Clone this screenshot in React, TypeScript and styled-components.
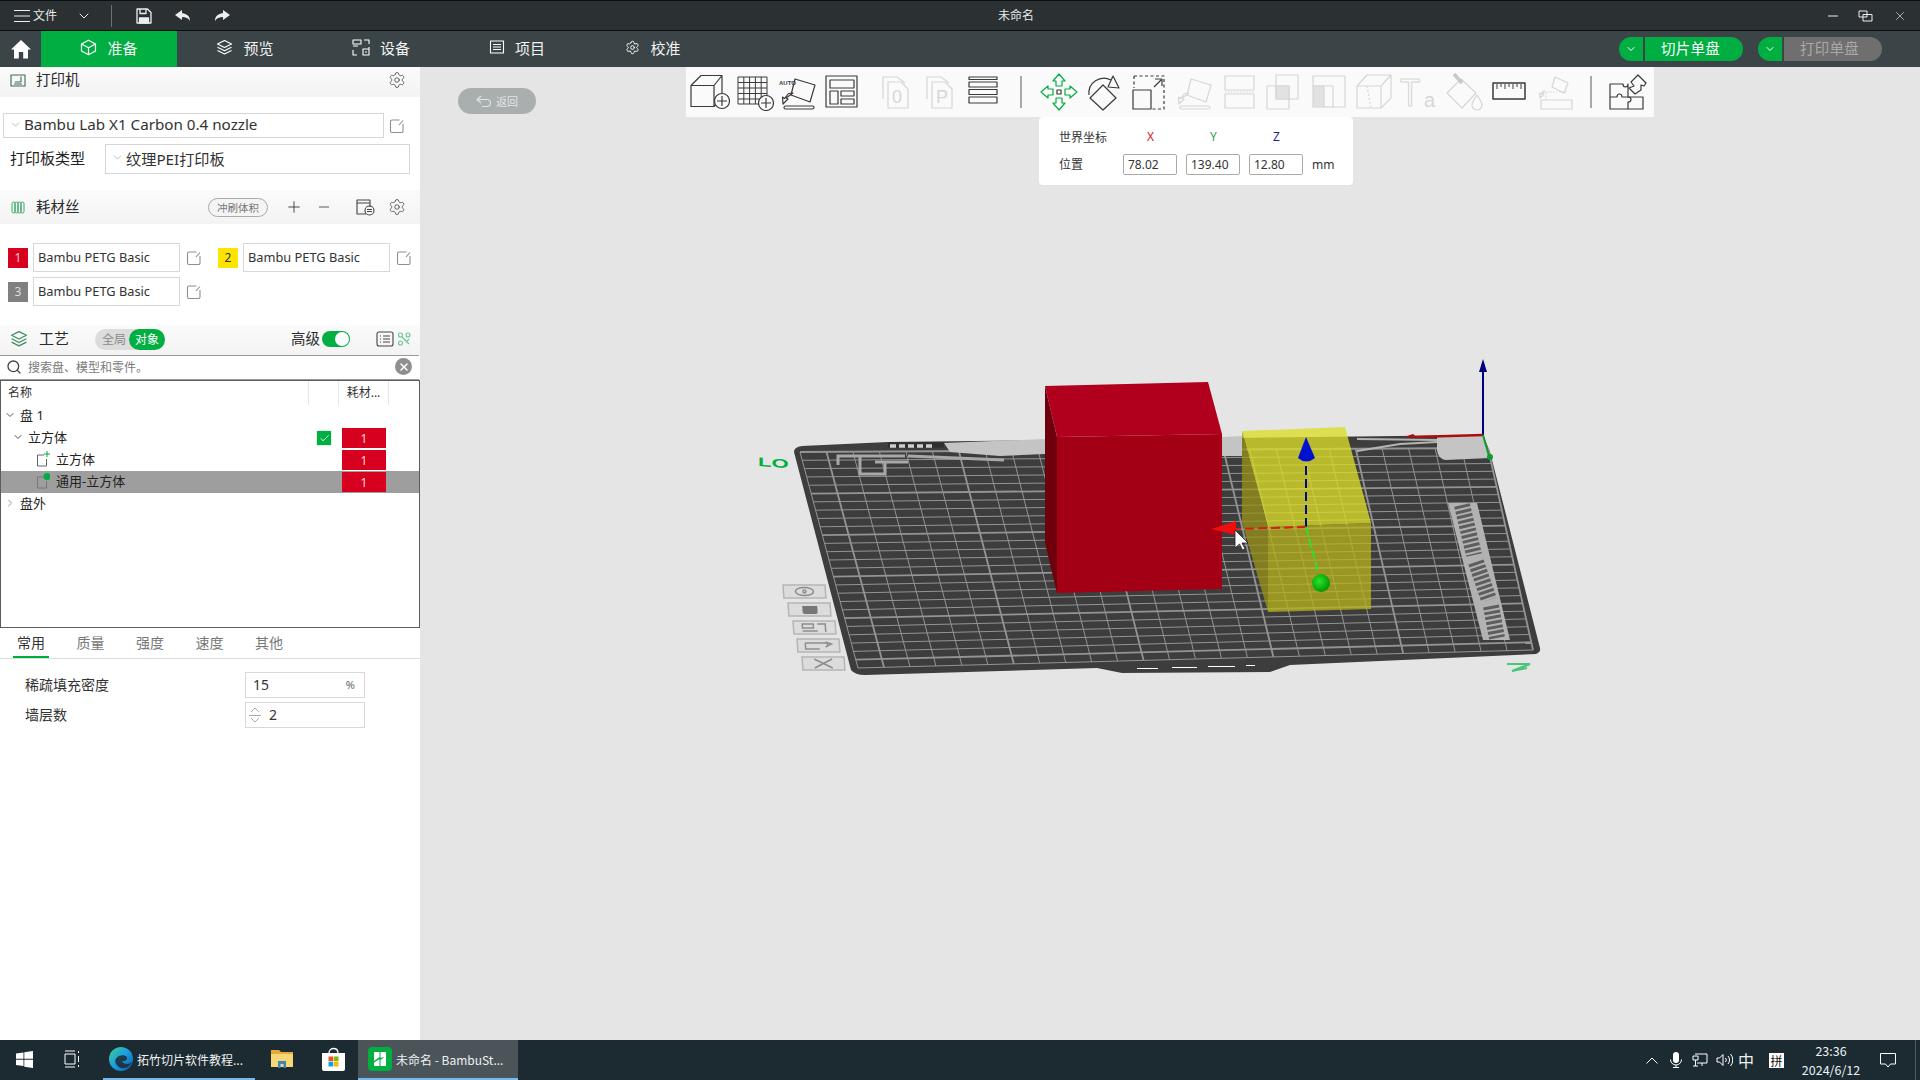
import React from "react";
import styled, { createGlobalStyle } from "styled-components";
import { ChevronDown, ChevronRight, Settings, Search, X, Plus, Minus, Check } from "lucide-react";

const UI = `"Noto Sans", "Noto Sans CJK SC", sans-serif`;
const GREEN = "#00ae42";
const RED = "#d8001f";

const Global = createGlobalStyle`
  html, body { margin: 0; padding: 0; background: #e5e5e5; }
  * { box-sizing: border-box; }
  body { font-family: ${UI}; color: #262e30; }
`;

const Root = styled.div`
  width: 1920px; height: 1080px; overflow: hidden;
  display: grid; grid-template-rows: 31px 36px 1fr 40px;
`;

/* title bar */
const TitleBar = styled.header`
  position: relative; display: flex; align-items: center; background: #2b3133; color: #e8eaea;
  border: 1px solid #0b0d0e; border-width: 1px 0;
`;
const TitleLeft = styled.div`display: flex; align-items: center; padding-left: 14px;`;
const FileLabel = styled.span`font-size: 12px; margin-left: 3px; width: 25px; white-space: nowrap; padding-bottom: 1px;`;
const TitleDivider = styled.span`width: 1px; height: 22px; background: #6b7274; margin: 0 24px 0 19px;`;
const TitleIconBtn = styled.span`display: flex; width: 16px; margin-right: 23px;`;
const TitleText = styled.div`
  position: absolute; left: 0; right: 0; text-align: center; font-size: 12px; pointer-events: none; padding: 0 0 2px 112px;
`;
const WinControls = styled.div`margin-left: auto; display: flex; align-items: center; gap: 20px; padding-right: 13px;`;

/* nav */
const NavBar = styled.nav`display: flex; align-items: center; background: #3b4446; color: #f1f2f2;`;
const HomeSlot = styled.div`width: 41px; display: flex; justify-content: center; padding-left: 1px;`;
const NavTab = styled.div<{ $active?: boolean }>`
  width: 136px; height: 36px; display: flex; align-items: center; justify-content: center; gap: 10px; font-size: 15px; padding-bottom: 4px;
  background: ${(p) => (p.$active ? GREEN : "transparent")};
`;
const NavRight = styled.div`margin-left: auto; display: flex; gap: 15px; padding-right: 38px;`;
const SplitBtn = styled.div`display: flex; height: 24px; gap: 2px;`;
const SplitHead = styled.span`
  width: 24px; border-radius: 12px 0 0 12px; background: ${GREEN}; display: flex; align-items: center; justify-content: center; color: #fff;
`;
const SplitMain = styled.span<{ $off?: boolean }>`
  width: 98px; border-radius: 0 12px 12px 0; display: flex; align-items: center; justify-content: center; font-size: 14.5px; letter-spacing: .3px; padding: 0 7px 3px 0;
  background: ${(p) => (p.$off ? "#6f6f6f" : GREEN)}; color: ${(p) => (p.$off ? "#a9a9a9" : "#fff")};
`;

/* main */
const Main = styled.main`display: flex; min-height: 0;`;
const Sidebar = styled.aside`width: 420px; background: #fff; display: flex; flex-direction: column;`;
const SectionHead = styled.div<{ $h: number; $pb?: number }>`
  height: ${(p) => p.$h}px; display: flex; align-items: center; background: linear-gradient(#fbfbfb, #f3f3f3); padding: 0 14px ${(p) => p.$pb ?? 0}px 10px; font-size: 14px; color: #2c2c2c;
`;
const HeadTitle = styled.span`margin-left: 10px; font-size: 14.5px; padding-bottom: 4px;`;
const Spacer = styled.span`flex: 1;`;
const PrinterBody = styled.div`padding: 16px 10px 16px 3px; display: flex; flex-direction: column; gap: 6px;`;
const Row = styled.div`display: flex; align-items: center;`;
const SelectBox = styled.div<{ $w: number; $h: number }>`
  width: ${(p) => p.$w}px; height: ${(p) => p.$h}px; border: 1px solid #d6d6d6; display: flex; align-items: center; padding: 0 0 3px 5px; gap: 2px; font-size: 15.2px; color: #333; white-space: nowrap;
`;
const EditSlot = styled.span`display: flex; margin-left: 5px;`;
const PlateLabel = styled.span`width: 102px; padding: 0 0 3px 7px; font-size: 15px; color: #222; white-space: nowrap;`;
const FlushPill = styled.span`
  width: 60px; height: 19px; border: 1px solid #aaa; border-radius: 10px; background: #f4f4f4; color: #777; font-size: 10.5px; display: flex; align-items: center; justify-content: center; margin-right: 17px;
`;
const HeadBtn = styled.span<{ $mr: number }>`display: flex; margin-right: ${(p) => p.$mr}px; color: #444;`;
const FilamentBody = styled.div`padding: 19px 0 19px 8px; display: grid; grid-template-columns: 210px 202px; row-gap: 5px;`;
const FilamentItem = styled.div`display: flex; align-items: center; height: 29px;`;
const Swatch = styled.span<{ $c: string; $fg: string }>`
  width: 20px; height: 20px; background: ${(p) => p.$c}; color: ${(p) => p.$fg}; font-size: 12px; display: flex; align-items: center; justify-content: center; margin-right: 5px;
`;
const FilamentName = styled.span`
  width: 147px; height: 29px; border: 1px solid #d8d8d8; display: flex; align-items: center; padding: 0 0 1px 4px; font-size: 12.8px; color: #333; margin-right: 6px;
`;
const ProcTitle = styled.span`margin-left: 11px; font-size: 15px; width: 56px; padding-bottom: 3px;`;
const ScopePill = styled.span`width: 70px; height: 21px; border-radius: 11px; background: #dcdcdc; display: flex; align-items: center; font-size: 12px; color: #8a8a8a; padding-left: 7px;`;
const ScopeOn = styled.span`margin-left: 3px; flex: 1; height: 21px; border-radius: 11px; background: ${GREEN}; color: #fff; display: flex; align-items: center; justify-content: center;`;
const Advanced = styled.span`margin-left: auto; font-size: 14.500px; margin-right: 2px; padding-bottom: 3px;`;
const Toggle = styled.span`width: 28px; height: 16px; border-radius: 8px; background: ${GREEN}; display: flex; justify-content: flex-end; align-items: center; padding-right: 1px; margin-right: 26px;`;
const Knob = styled.span`width: 14px; height: 14px; border-radius: 50%; background: #fff;`;
const SearchBar = styled.div`
  height: 25px; border: 1px solid #9a9a9a; border-width: 1px 0 1px 0; display: flex; align-items: center; padding: 0 7px 2px 6px; font-size: 12px; color: #7a7a7a; gap: 6px; margin-right: 1px;
`;
const ClearBtn = styled.span`margin-left: auto; width: 17px; height: 17px; border-radius: 50%; background: #8f8f8f; color: #fff; display: flex; align-items: center; justify-content: center;`;
const Tree = styled.div`height: 248px; border: 1px solid #5c5c5c; display: flex; flex-direction: column;`;
const TreeHead = styled.div`height: 24px; display: grid; grid-template-columns: 308px 30px 50px 1fr; font-size: 12px; color: #333;`;
const TreeHeadCell = styled.span<{ $c?: boolean }>`
  display: flex; align-items: center; padding: 0 0 2px ${(p) => (p.$c ? 0 : 7)}px; justify-content: ${(p) => (p.$c ? "center" : "flex-start")}; border-right: 1px solid #e6e6e6;
`;
const TreeRow = styled.div<{ $sel?: boolean }>`
  height: 22px; display: grid; grid-template-columns: 308px 30px 50px 1fr; align-items: center; font-size: 13px; color: #222;
  background: ${(p) => (p.$sel ? "#9e9e9e" : "transparent")};
`;
const TreeName = styled.span<{ $lvl: number }>`display: flex; align-items: center; gap: ${(p) => (p.$lvl === 2 ? 6 : 0)}px; padding: 0 0 3px ${(p) => [3, 11, 35][p.$lvl]}px;`;
const Caret = styled.span`display: flex; width: 16px; color: #555;`;
const CheckBox = styled.span`width: 14px; height: 14px; margin: 0 auto; background: ${GREEN}; display: flex; align-items: center; justify-content: center; color: #fff; box-shadow: 0 0 2px #8fd8a8;`;
const FilCell = styled.span`height: 20px; width: 44px; margin: 0 auto; background: ${RED}; color: #f7d5d9; font-size: 12px; display: flex; align-items: center; justify-content: center;`;
const Tabs = styled.div`height: 31px; display: flex; border-bottom: 1px solid #dcdcdc; padding-left: 13px; gap: 23.500px; font-size: 14px; color: #777;`;
const Tab = styled.span<{ $on?: boolean }>`
  width: 36px; height: 30px; display: flex; align-items: center; justify-content: center; color: ${(p) => (p.$on ? "#333" : "#777")};
  border-bottom: 2px solid ${(p) => (p.$on ? GREEN : "transparent")};
`;
const Fields = styled.div`padding: 13px 0 0 25px; display: flex; flex-direction: column; gap: 4px;`;
const FieldRow = styled.div`display: flex; align-items: center; font-size: 14px; color: #333;`;
const FieldLabel = styled.span`width: 220px; padding-bottom: 2px;`;
const FieldInput = styled.div`width: 120px; height: 26px; border: 1px solid #d8d8d8; display: flex; align-items: center; padding: 0 9px 1px 7px; font-size: 14px; color: #333;`;
const Unit = styled.span`margin-left: auto; font-size: 11px; color: #666;`;
const Stepper = styled.span`display: flex; flex-direction: column; margin: 0 8px 0 -4px; color: #aaa;`;

/* viewport */
const Viewport = styled.section`position: relative; flex: 1; background: #e5e5e5; overflow: hidden;`;
const Scene = styled.svg`position: absolute; inset: 0; width: 1500px; height: 973px;`;
const BackBtn = styled.div`
  position: absolute; left: 38px; top: 21px; width: 78px; height: 26px; border-radius: 13px; background: #a9afaf; color: #e3e5e5; font-size: 11px; display: flex; align-items: center; justify-content: center; gap: 4px;
`;
const Toolbar = styled.div`
  position: relative; margin-left: 266px; width: 968px; height: 50px; background: #fafafa; display: flex; align-items: center; padding-left: 2px;
`;
const ToolGroup = styled.div<{ $ml: number }>`display: flex; margin-left: ${(p) => p.$ml}px;`;
const ToolSlot = styled.span<{ $w: number }>`width: ${(p) => p.$w}px; display: flex; justify-content: center; align-items: center;`;
const ToolSep = styled.span<{ $ml: number }>`width: 2px; height: 32px; background: #a8a8a8; margin-left: ${(p) => p.$ml}px;`;
const PosPanel = styled.div`
  position: relative; margin-left: 619px; width: 314px; height: 68px; background: #fff; border-radius: 4px; padding: 9px 0 0 20px; font-size: 12px; color: #333;
  display: grid; grid-template-columns: 64px 63px 63px 63px 1fr; grid-template-rows: 21px 24px; row-gap: 5px; align-items: center;
`;
const AxisLabel = styled.span<{ $c: string }>`color: ${(p) => p.$c}; padding-left: 24px;`;
const PosInput = styled.span`width: 54px; height: 21px; border: 1px solid #aaa; border-radius: 2px; display: flex; align-items: center; padding-left: 4px; font-size: 12px;`;

/* taskbar */
const Taskbar = styled.footer`background: #1c2a31; color: #eef1f2; display: flex; align-items: center; font-family: "Noto Sans CJK SC", "Noto Sans", sans-serif; font-size: 12px;`;
const TaskSlot = styled.div<{ $w: number; $active?: boolean; $open?: boolean; $pl?: number; $pr?: number }>`
  width: ${(p) => p.$w}px; height: 40px; display: flex; align-items: center; justify-content: ${(p) => (p.$pl ? "flex-start" : "center")}; gap: 4px; white-space: nowrap;
  padding: 0 ${(p) => p.$pr ?? 0}px 0 ${(p) => p.$pl ?? 0}px;
  background: ${(p) => (p.$active ? "#4a5459" : "transparent")};
  border-bottom: 2px solid ${(p) => (p.$open ? "#76b9ed" : "transparent")};
`;
const Tray = styled.div`margin-left: auto; display: flex; align-items: center; gap: 8px; padding-right: 19px;`;
const TrayItem = styled.span<{ $ml: number }>`display: flex; margin-left: ${(p) => p.$ml}px;`;
const ImeBox = styled.span`width: 15px; height: 15px; background: #fff; color: #111; font-size: 12px; line-height: 15px; text-align: center; margin-left: 7px;`;
const ImeText = styled.span`font-size: 16px; margin-left: -3px;`;
const Clock = styled.span`width: 66px; margin: 0 8px 0 6px; text-align: center; font-size: 12.500px; line-height: 19px;`;
const ShowDesktop = styled.span`width: 1px; height: 40px; background: #4e5a60; margin-right: 4px;`;

/* Icons */
type S = { c?: string };
const Svg = styled.svg`display: block; fill: none; stroke-linejoin: round;`;
const Edit = () => (
  <Svg width="16" height="16" viewBox="0 0 16 16" stroke="#8e8e8e" strokeWidth="1.1">
    <path d="M10.5 2H3a1.5 1.5 0 0 0-1.5 1.5V13A1.5 1.5 0 0 0 3 14.5h9.5A1.5 1.5 0 0 0 14 13V6M14 2.500L10 7" />
  </Svg>
);
const Gear = () => <Settings size={18} strokeWidth={1.2} color="#555" />;
const Cube = ({ c = "#fff" }: S) => (
  <Svg width="17" height="17" viewBox="0 0 17 17" stroke={c} strokeWidth="1.2">
    <path d="M8.5 1.2L15.5 5v7l-7 3.8L1.5 12V5zM1.5 5l7 3.8L15.5 5M8.5 8.8v7" />
  </Svg>
);
const LayersIco = ({ c = "#fff", s = 17 }: S & { s?: number }) => (
  <Svg width={s} height={s} viewBox="0 0 17 17" stroke={c} strokeWidth="1.2">
    <path d="M8.5 1.5L15.5 5l-7 3.5L1.5 5zM1.5 8.3l7 3.5 7-3.5M1.5 11.5l7 3.5 7-3.5" />
  </Svg>
);
const DeviceIco = () => (
  <Svg width="18" height="17" viewBox="0 0 18 17" stroke="#fff" strokeWidth="1.1">
    <path d="M1 1h8v4H1zM12 1h5v4M1 7h5M1 11v5h4M17 8v8h-6v-6h6M13 13h2" />
  </Svg>
);
const ProjectIco = () => (
  <Svg width="16" height="16" viewBox="0 0 16 16" stroke="#fff" strokeWidth="1.1">
    <path d="M1.5 2h13v12h-13zM4 5.5h8M4 8h8M4 10.5h8" />
  </Svg>
);
const CalibIco = () => <Settings size={15} strokeWidth={1.5} color="#fff" />;
const HomeIco = () => (
  <svg width="20" height="20" viewBox="0 0 20 20"><path fill="#fff" d="M10 1L20 10.500H17V19.500H12.200V13H7.800V19.500H3V10.500H0z" /></svg>
);
const WinBtnMin = () => <Svg width="10" height="10" viewBox="0 0 10 10" stroke="#eee"><path d="M0 5h10" /></Svg>;
const WinBtnMax = () => (
  <Svg width="15" height="12" viewBox="0 0 15 12" stroke="#eee"><path d="M1 1h8v6H1zM5 4.5h9V11H5z" /></Svg>
);

const PrinterIco = () => (
  <Svg width="16" height="14" viewBox="0 0 16 14" stroke="#3d6b52" strokeWidth="1.1">
    <path d="M1 2h14v11H1zM4 11h8M11 3.5V9M5 9h6" />
  </Svg>
);
const FilamentIco = () => (
  <Svg width="16" height="13" viewBox="-1 0 16 13" stroke="#3aa76a" strokeWidth="1">
    <rect x="1" y="1" width="3" height="11" rx="1.5" /><rect x="4" y="1" width="3" height="11" rx="1.5" /><rect x="7" y="1" width="3" height="11" rx="1.5" /><rect x="10" y="1" width="3" height="11" rx="1.5" />
  </Svg>
);
const FlushIco = () => (
  <Svg width="20" height="17" viewBox="0 0 20 17" stroke="#444" strokeWidth="1.1">
    <path d="M2 1h13v3H2zM2 4v11h9M15 4v4" /><circle cx="14.5" cy="11.5" r="4.5" /><path d="M12 10.5h5M12 12.5h5" />
  </Svg>
);
const ListIco = () => (
  <Svg width="18" height="16" viewBox="0 0 18 16" stroke="#444" strokeWidth="1.1">
    <rect x="1" y="1" width="16" height="14" rx="2" /><path d="M4 5h1M7 5h7M4 8h1M7 8h7M4 11h1M7 11h7" />
  </Svg>
);
const ToolsIco = () => (
  <Svg width="14" height="14" viewBox="0 0 14 14" stroke="#6cc48f" strokeWidth="1.1">
    <circle cx="3.5" cy="3" r="2" /><circle cx="11" cy="3" r="2" /><circle cx="3.5" cy="11" r="2" /><path d="M5 5l7 7M9 10l3-3" />
  </Svg>
);
const PartIco = ({ dot }: { dot?: boolean }) => (
  <Svg width="14" height="16" viewBox="0 0 14 16" stroke={dot ? "#777" : "#666"} strokeWidth="1">
    <path d="M8 4H1.5v11h9V8" />
    {dot ? <circle cx="11" cy="3.5" r="3.5" fill={GREEN} stroke="none" /> : <path d="M11 0v6M8 3h6" stroke={GREEN} />}
  </Svg>
);

const D = "#3a3a3a";
const L = "#d6d6d6";
const Tool = ({ children, c = D }: { children: React.ReactNode; c?: string }) => (
  <Svg width="40" height="38" viewBox="0 0 40 38" stroke={c} strokeWidth="1.2">{children}</Svg>
);
const PlusDisc = ({ x, y }: { x: number; y: number }) => (
  <g>
    <circle cx={x} cy={y} r="7.5" fill="#fafafa" />
    <path d={`M${x - 5} ${y}h10M${x} ${y - 5}v10`} />
  </g>
);
const ToolA = () => (
  <Tool><path d="M1 12.5L11 2.5h21v23l-8 8H1zM1 12.5h23v21M24 12.5l8-10" /><PlusDisc x={32} y={28} /></Tool>
);
const ToolB = () => (
  <Tool>
    <path d="M4 4h29v27H4zM4 9.5h29M4 15h29M4 20.5h29M4 26h29M9.8 4v27M15.6 4v27M21.4 4v27M27.2 4v27" strokeWidth="1" />
    <PlusDisc x={32} y={30} />
  </Tool>
);
const OrientShape = ({ c }: { c: string }) => (
  <g stroke={c}>
    <path d="M17 6l20 6-5 17-19-7z" />
    <path d="M15 20l-7 5 2 1-5 5-.5-7 2 1.500 4-5z" />
    <rect x="6" y="33" width="30" height="3" rx="1.5" />
  </g>
);
const AutoTag = styled.text`font: 700 6px "Liberation Sans", sans-serif; fill: ${D}; stroke: none;`;
const ToolC = () => (
  <Tool><OrientShape c={D} /><AutoTag x={1} y={12}>AUTO</AutoTag></Tool>
);
const ToolD = () => (
  <Tool><path d="M4 3h31v31H4zM8 7h24v8H8zM8 18h8v13H8zM19 18h13v5H19zM19 26h13v5H19z" /></Tool>
);
const PageGlyph = styled.text`font: 18px "Liberation Sans", sans-serif; fill: ${L}; stroke: none;`;
const ToolPage = ({ t }: { t: string }) => (
  <Tool c={L}>
    <path d="M8 26V4h14l8 6" />
    <path fill="#fafafa" d="M13 9h13l7 7v19H13z" />
    <PageGlyph x="17" y="30">{t}</PageGlyph>
  </Tool>
);
const ToolLayers = () => (
  <Tool><path d="M6 4h28v2.500H6zM6 9h28v5H6zM6 16.500h28v5H6zM6 24h28v6H6z" /></Tool>
);
const MoveArrow = ({ r }: { r: number }) => (
  <path transform={`rotate(${r} 20 19)`} d="M20 1l6 7h-3v5h-6V8h-3z" />
);
const ToolMove = () => (
  <Tool c={GREEN}>
    <MoveArrow r={0} /><MoveArrow r={90} /><MoveArrow r={180} /><MoveArrow r={270} />
    <rect x="18" y="17" width="4" height="4" stroke="#3a3a3a" />
  </Tool>
);
const ToolRotate = () => (
  <Tool>
    <path d="M19 12l13 13-13 12L6 25z" />
    <path d="M5 22A15 15 0 0 1 27 7" />
    <path d="M29 3l6 12-11-1z" />
  </Tool>
);
const ToolScale = () => (
  <Tool>
    <path d="M5 3h30v33H22" strokeDasharray="3 2.500" /><path d="M5 3v12" strokeDasharray="3 2.500" />
    <rect x="4" y="17" width="18" height="19" />
    <path d="M25 14l7-7M26 6h7v7" />
  </Tool>
);
const ToolOrientOff = () => <Tool c={L}><OrientShape c={L} /></Tool>;
const ToolSplit = () => (
  <Tool c={L}><path d="M6 3h29v14H6zM6 21h29v14H6z" /><path d="M6 19h29" strokeDasharray="1.500 1.500" /></Tool>
);
const ToolBool = () => (
  <Tool c={L}><path d="M3 13h22v23H3zM12 2h22v24H12z" /><rect x="12" y="13" width="13" height="13" fill="#e2e2e2" /></Tool>
);
const ToolCut = () => (
  <Tool c={L}><path d="M4 3h32v31H24V13H4z" /><path d="M4 13h11v21H4z" fill="#e2e2e2" /><path d="M15 34h9" /></Tool>
);
const ToolSeam = () => (
  <Tool c={L}><path d="M3 13L13 2h24v23l-10 10H3zM3 13h24v22M27 13L37 2" /><path d="M13 13l4 22" strokeDasharray="2 2" /></Tool>
);
const TextBig = styled.text`font: 30px "Liberation Sans", sans-serif; fill: #fafafa; stroke: ${L}; stroke-width: .9;`;
const TextSmall = styled.text`font: 20px "Liberation Sans", sans-serif; fill: ${L}; stroke: none;`;
const ToolText = () => (
  <Svg width="40" height="44" viewBox="0 -3 40 44">
    <TextBig transform="translate(1 33) scale(1.1 1.3)">T</TextBig>
    <TextSmall x="25" y="34">a</TextSmall>
  </Svg>
);
const ToolPaint = () => (
  <Tool c={L}>
    <path d="M3 20L17 6l15 14-14 15z" />
    <path d="M10 1l8 9" strokeWidth="3.5" stroke="#c8c8c8" />
    <path d="M33 22c3 5 5 7 5 10a5 5 0 0 1-10 0c0-3 2-5 5-10z" fill="#fafafa" />
  </Tool>
);
const ToolRuler = () => (
  <Tool><rect x="4" y="10" width="32" height="16" fill="#fafafa" strokeWidth="1.500" /><path d="M8 11v5M12 11v3M16 11v5M20 11v3M24 11v5M28 11v3M32 11v5" strokeWidth="1" /></Tool>
);
const ToolAssembly = () => (
  <Tool c={L}>
    <path d="M21 4l13 6-4 10-12-6zM11 18l-3 2 2 1-4 4-.5-5 1.500 1 3-3zM7 27h31v9H7z" />
    <path d="M12 27v-8h22" strokeDasharray="1.500 1.500" />
  </Tool>
);
const ToolPuzzle = () => (
  <Tool>
    <path d="M3 11h13c0 4 5 4 5 0V24c4 0 4 5 0 5v7H3z" />
    <path d="M3 24h7c0-4 5-4 5 0h6M21 24h15v12H21" />
    <path d="M24 9l7-7 8 8-2 3-3-1v5l-6 4-6-6 5-2z" />
  </Tool>
);

/* taskbar icons */
const WinLogo = () => (
  <svg width="17" height="17" viewBox="0 0 17 17"><path fill="#fff" d="M0 2.500L7.500 1.400v6.400H0zM8.300 1.300L17 0v7.800H8.300zM0 8.700h7.500v6.400L0 14zM8.300 8.700H17V17l-8.700-1.300z" /></svg>
);
const TaskView = () => (
  <Svg width="16" height="18" viewBox="0 0 16 18" stroke="#fff" strokeWidth="1">
    <path d="M1 4h10v10H1zM1 1h10M1 17h10M14.500 1v2M14.500 6v6M14.500 15v2" />
  </Svg>
);
const Edge = () => (
  <svg width="24" height="24" viewBox="0 0 24 24">
    <defs>
      <linearGradient id="eg" x1="0" y1="0" x2="1" y2="1"><stop offset="0" stopColor="#3fd08c" /><stop offset=".5" stopColor="#1b9de2" /><stop offset="1" stopColor="#0c59a4" /></linearGradient>
    </defs>
    <circle cx="12" cy="12" r="12" fill="url(#eg)" />
    <path fill="#1c2a31" d="M10 9c4-2 9 0 8 3s-5 2-5 2 1 3 5 3c2 0 4-1 5-2-2 5-8 8-13 5S5 11 10 9z" opacity=".85" />
  </svg>
);
const Folder = () => (
  <svg width="22" height="20" viewBox="0 0 22 20">
    <path fill="#e8a93b" d="M0 1h8l2 2h12v15H0z" /><path fill="#f6d775" d="M0 5h22v13H0z" />
    <path fill="#3d86b8" d="M7 12h8v7h-2.500v-4h-3v4H7z" />
  </svg>
);
const Store = () => (
  <svg width="23" height="24" viewBox="0 0 23 24">
    <path fill="none" stroke="#fff" strokeWidth="1.300" d="M7 6c0-6 9-6 9 0" />
    <path fill="#fff" d="M0 6h23v16a2 2 0 0 1-2 2H2a2 2 0 0 1-2-2z" />
    <path fill="#f25022" d="M6.500 9.500h4.700v4.700H6.500z" /><path fill="#7fba00" d="M11.800 9.500h4.700v4.700h-4.700z" />
    <path fill="#00a4ef" d="M6.500 14.800h4.700v4.700H6.500z" /><path fill="#ffb900" d="M11.800 14.800h4.700v4.700h-4.700z" />
  </svg>
);
const BambuApp = () => (
  <svg width="24" height="24" viewBox="0 0 24 24">
    <rect width="24" height="24" rx="4" fill={GREEN} />
    <path fill="#fff" d="M6 5h5.500v5L6 14zM12.500 5H18v14h-5.500v-6l4-3-4 1zM6 15.500l5.500-3.500V19H6z" />
  </svg>
);
const TrayChev = () => <Svg width="12" height="7" viewBox="0 0 12 7" stroke="#fff"><path d="M.5 6.500L6 1l5.500 5.500" /></Svg>;
const Mic = () => (
  <svg width="12" height="16" viewBox="0 0 12 16"><rect x="3" y="0" width="6" height="11" rx="3" fill="#fff" /><path fill="none" stroke="#fff" d="M.5 7.500a5.500 5.500 0 0 0 11 0M6 13v2.500M3 15.500h6" /></svg>
);
const Net = () => (
  <Svg width="16" height="14" viewBox="0 0 16 14" stroke="#fff"><path d="M3 1h12v9H5M1 3h5v4H1zM3.500 7v6M1 13h5M10 10v3" /></Svg>
);
const Vol = () => (
  <Svg width="17" height="14" viewBox="0 0 17 14" stroke="#fff"><path d="M1 5h2.500L7 1.500v11L3.500 9H1zM9.500 5a3 3 0 0 1 0 4M12 3a6 6 0 0 1 0 8M14.500 1a9 9 0 0 1 0 12" /></Svg>
);
const Notice = () => (
  <Svg width="16" height="15" viewBox="0 0 16 15" stroke="#fff"><path d="M.5.500h15v10.500h-5L8 14l-2.500-3h-5z" /></Svg>
);

/* 3D scene */
const lerp = (a: number[], b: number[], t: number) => [a[0] + (b[0] - a[0]) * t, a[1] + (b[1] - a[1]) * t];
const TL = [800, 452], TR = [1488, 448], BR = [1533, 650], BL = [858, 668];
const idx = Array.from({ length: 27 }, (_, i) => i);
const GridLines = () => (
  <g stroke="#949494">
    {idx.map((i) => {
      const a = lerp(TL, TR, i / 26), b = lerp(BL, BR, i / 26);
      return <line key={`v${i}`} x1={a[0]} y1={a[1]} x2={b[0]} y2={b[1]} strokeWidth={i % 5 === 1 ? 1.8 : 1} />;
    })}
    {idx.map((i) => {
      const a = lerp(TL, BL, i / 26), b = lerp(TR, BR, i / 26);
      return <line key={`h${i}`} x1={a[0]} y1={a[1]} x2={b[0]} y2={b[1]} strokeWidth={i % 5 === 0 ? 1.8 : 1} />;
    })}
  </g>
);
const LoMark = styled.text`font: 900 13px "Liberation Sans", sans-serif; fill: ${GREEN};`;
const LabelPlate = ({ x, y, children }: { x: number; y: number; children: React.ReactNode }) => (
  <g transform={`translate(${x} ${y}) skewX(4)`}>
    <rect width="42" height="13" fill="#dcdcdc" stroke="#b5b5b5" strokeWidth="1.500" />
    <g fill="none" stroke="#8d8d8d" strokeWidth="1.500">{children}</g>
  </g>
);
const PlateScene = () => (
  <Scene viewBox="420 67 1500 973">
    <path fill="#3d3d3d" d="M794 452Q794 447 802 446L888 442L1483 435L1490 452L1540 648Q1541 652 1536 654L1290 665L1270 672L1122 673L1097 668L865 675Q855 675 851 670Z" />
    <GridLines />
    <path fill="#c4c4c4" d="M944 443L1045 439L1045 454L1000 456L950 452ZM1222 437L1242 436V456H1222ZM1437 436L1483 435L1490 458L1445 460Q1438 458 1437 450Z" />
    <path fill="none" stroke="#a8a8a8" strokeWidth="3" d="M838 465V456H905M860 456V474H885V461M875 462H908M908 456L1004 460" />
    <path fill="none" stroke="#2f2f2f" strokeWidth="5" d="M888 445H944" />
    <path fill="none" stroke="#cfcfcf" strokeWidth="3.500" strokeDasharray="6 3" d="M890 446H932" />
    <path fill="none" stroke="#b5b5b5" strokeWidth="2" d="M1357 439L1437 440M1357 451L1400 444L1437 442" />
    <path fill="#b2b2b2" d="M1448 503L1477 503L1510 640L1483 640Z" />
    <path fill="none" stroke="#5e5e5e" strokeWidth="16" strokeDasharray="3 2" d="M1462 505L1474 555M1476 562L1489 600M1491 606L1497 638" />
    <LabelPlate x={783} y={585}><ellipse cx="21" cy="6.500" rx="9" ry="4" /><circle cx="21" cy="6.500" r="1.500" /></LabelPlate>
    <LabelPlate x={788} y={603}><path d="M14 3h15v6a2 2 0 0 1-2 2h-11a2 2 0 0 1-2-2z" fill="#777" stroke="none" /></LabelPlate>
    <LabelPlate x={793} y={621}><path d="M9 3h11v4H9zM24 3h8v8M9 10h15" /></LabelPlate>
    <LabelPlate x={797} y={639}><path d="M8 4h22v3M8 4v6h14M28 3l6 2-6 3" /></LabelPlate>
    <LabelPlate x={802} y={657}><path d="M12 2l18 9M30 2L12 11" /></LabelPlate>
    <LoMark transform="translate(758 466) skewY(4) scale(1.700 .95)">LO</LoMark>
    <path fill="none" stroke="#46c77a" strokeWidth="2" d="M1507 664H1530L1512 671L1527 668" />
    <path fill="#fff" d="M1137 668h21v1h-21zM1172 667h25v1h-25zM1208 666h27v1h-27zM1246 665h9v1h-9z" />

    <path fill="#b0001d" d="M1045 386L1208 382L1222 434L1057 437Z" />
    <path fill="#a30016" d="M1057 437L1222 434V589L1057 593Z" />
    <path fill="#6e000e" d="M1045 386L1057 437V593L1045 543Z" />

    <path fill="#dcdc2a" fillOpacity=".78" d="M1242 431L1345 427L1371 523L1268 527Z" />
    <path fill="#b9b41c" fillOpacity=".75" d="M1268 527L1371 523V609L1268 612Z" />
    <path fill="#9a9318" fillOpacity=".75" d="M1242 431L1268 527V612L1242 522Z" />

    <path stroke="#000a80" strokeWidth="2" strokeDasharray="9 4" d="M1306 527V462" />
    <path fill="#0012d0" d="M1306 437L1315 458Q1306 465 1298 458Z" />
    <path stroke="#d42010" strokeWidth="2" strokeDasharray="9 4" d="M1306 527L1236 529" />
    <path fill="#f00d0d" d="M1211 529L1236 521V535Z" />
    <path stroke="#2fe02f" strokeWidth="2" strokeDasharray="9 3" d="M1306 527L1318 572" />
    <radialGradient id="ball" cx=".4" cy=".4" r=".7"><stop offset="0" stopColor="#27e627" /><stop offset="1" stopColor="#008a00" /></radialGradient>
    <circle cx="1321" cy="583" r="9" fill="url(#ball)" />

    <path stroke="#00007c" strokeWidth="2" d="M1483 435V372" />
    <path fill="#00007c" d="M1483 359L1487 372H1479Z" />
    <path stroke="#a80f0f" strokeWidth="2.500" d="M1483 435L1415 437" />
    <path fill="#a80f0f" d="M1404 437L1413 434L1418 438Z" />
    <path stroke="#0f9a2a" strokeWidth="2" d="M1483 435L1489 456" />
    <circle cx="1490" cy="457" r="3" fill="#0f9a2a" />

    <path fill="#fff" stroke="#222" strokeWidth=".8" d="M1235 530V548L1239.500 544L1242.500 550L1245 549L1242 543H1248Z" />
  </Scene>
);

const BackIcon = () => (
  <Svg width="16" height="13" viewBox="0 0 16 13" stroke="#e3e5e5" strokeWidth="1.100"><path d="M5 1L1 4.500 5 8M1 4.500h10a3.500 3.500 0 0 1 0 7H6" /></Svg>
);

const selectCaret = <ChevronDown size={13} color="#999" strokeWidth={1.2} />;

export default function App() {
  return (
    <Root>
      <Global />
      <TitleBar>
        <TitleLeft>
          <Svg width="16" height="14" viewBox="0 0 16 14" stroke="#eee" strokeWidth="1.200"><path d="M0 1.500h16M0 7h16M0 12.500h16" /></Svg>
          <FileLabel>文件</FileLabel>
          <ChevronDown size={16} style={{ marginLeft: 18 }} strokeWidth={1.5} />
          <TitleDivider />
          <TitleIconBtn>
            <Svg width="16" height="16" viewBox="0 0 16 16" stroke="#eee" strokeWidth="1.300"><path d="M1 1h10.500L15 4.500V15H1zM4 1v4.500h6V1" /><rect x="3.500" y="10" width="9" height="5" fill="#eee" /></Svg>
          </TitleIconBtn>
          <TitleIconBtn>
            <svg width="16" height="14" viewBox="0 0 16 14"><path fill="#eee" d="M7 1L0 6l7 5V8c4 0 6 1 8 4 0-5-3-7-8-8z" /></svg>
          </TitleIconBtn>
          <TitleIconBtn>
            <svg width="16" height="14" viewBox="0 0 16 14"><path fill="#eee" d="M9 1l7 5-7 5V8c-4 0-6 1-8 4 0-5 3-7 8-8z" /></svg>
          </TitleIconBtn>
        </TitleLeft>
        <TitleText>未命名</TitleText>
        <WinControls>
          <WinBtnMin />
          <WinBtnMax />
          <X size={14} strokeWidth={1.1} color="#eee" />
        </WinControls>
      </TitleBar>

      <NavBar>
        <HomeSlot><HomeIco /></HomeSlot>
        <NavTab $active><Cube />准备</NavTab>
        <NavTab><LayersIco />预览</NavTab>
        <NavTab><DeviceIco />设备</NavTab>
        <NavTab><ProjectIco />项目</NavTab>
        <NavTab><CalibIco />校准</NavTab>
        <NavRight>
          <SplitBtn><SplitHead><ChevronDown size={12} /></SplitHead><SplitMain>切片单盘</SplitMain></SplitBtn>
          <SplitBtn><SplitHead><ChevronDown size={12} /></SplitHead><SplitMain $off>打印单盘</SplitMain></SplitBtn>
        </NavRight>
      </NavBar>

      <Main>
        <Sidebar>
          <SectionHead $h={30} $pb={4}><PrinterIco /><HeadTitle>打印机</HeadTitle><Spacer /><Gear /></SectionHead>
          <PrinterBody>
            <Row>
              <SelectBox $w={381} $h={25}>{selectCaret}Bambu Lab X1 Carbon 0.4 nozzle</SelectBox>
              <EditSlot><Edit /></EditSlot>
            </Row>
            <Row>
              <PlateLabel>打印板类型</PlateLabel>
              <SelectBox $w={305} $h={30}>{selectCaret}纹理PEI打印板</SelectBox>
            </Row>
          </PrinterBody>
          <SectionHead $h={34}>
            <FilamentIco /><HeadTitle>耗材丝</HeadTitle><Spacer />
            <FlushPill>冲刷体积</FlushPill>
            <HeadBtn $mr={13}><Plus size={18} strokeWidth={1.300} /></HeadBtn>
            <HeadBtn $mr={23}><Minus size={16} strokeWidth={1.300} /></HeadBtn>
            <HeadBtn $mr={13}><FlushIco /></HeadBtn>
            <Gear />
          </SectionHead>
          <FilamentBody>
            <FilamentItem><Swatch $c={RED} $fg="#f5c6cc">1</Swatch><FilamentName>Bambu PETG Basic</FilamentName><Edit /></FilamentItem>
            <FilamentItem><Swatch $c="#fce300" $fg="#333">2</Swatch><FilamentName>Bambu PETG Basic</FilamentName><Edit /></FilamentItem>
            <FilamentItem><Swatch $c="#808080" $fg="#ddd">3</Swatch><FilamentName>Bambu PETG Basic</FilamentName><Edit /></FilamentItem>
          </FilamentBody>
          <SectionHead $h={30} $pb={2}>
            <LayersIco c="#3d8f60" s={18} />
            <ProcTitle>工艺</ProcTitle>
            <ScopePill>全局<ScopeOn>对象</ScopeOn></ScopePill>
            <Advanced>高级</Advanced>
            <Toggle><Knob /></Toggle>
            <HeadBtn $mr={3}><ListIco /></HeadBtn>
            <HeadBtn $mr={-5}><ToolsIco /></HeadBtn>
          </SectionHead>
          <SearchBar>
            <Search size={16} color="#444" strokeWidth={2} />
            搜索盘、模型和零件。
            <ClearBtn><X size={12} strokeWidth={3} /></ClearBtn>
          </SearchBar>
          <Tree>
            <TreeHead>
              <TreeHeadCell>名称</TreeHeadCell>
              <TreeHeadCell />
              <TreeHeadCell $c>耗材...</TreeHeadCell>
              <span />
            </TreeHead>
            <TreeRow><TreeName $lvl={0}><Caret><ChevronDown size={12} strokeWidth={2} /></Caret>盘 1</TreeName></TreeRow>
            <TreeRow>
              <TreeName $lvl={1}><Caret><ChevronDown size={12} strokeWidth={2} /></Caret>立方体</TreeName>
              <CheckBox><Check size={11} strokeWidth={2} /></CheckBox>
              <FilCell>1</FilCell>
            </TreeRow>
            <TreeRow>
              <TreeName $lvl={2}><PartIco />立方体</TreeName><span /><FilCell>1</FilCell>
            </TreeRow>
            <TreeRow $sel>
              <TreeName $lvl={2}><PartIco dot />通用-立方体</TreeName><span /><FilCell>1</FilCell>
            </TreeRow>
            <TreeRow><TreeName $lvl={0}><Caret><ChevronRight size={12} color="#999" strokeWidth={2} /></Caret>盘外</TreeName></TreeRow>
          </Tree>
          <Tabs>
            <Tab $on>常用</Tab><Tab>质量</Tab><Tab>强度</Tab><Tab>速度</Tab><Tab>其他</Tab>
          </Tabs>
          <Fields>
            <FieldRow><FieldLabel>稀疏填充密度</FieldLabel><FieldInput>15<Unit>%</Unit></FieldInput></FieldRow>
            <FieldRow>
              <FieldLabel>墙层数</FieldLabel>
              <FieldInput>
                <Stepper>
                  <svg width="12" height="10" viewBox="0 0 12 10" fill="none" stroke="#aaa"><path d="M2 6l4-4 4 4M0 9.500h12" /></svg>
                  <svg width="12" height="8" viewBox="0 0 12 8" fill="none" stroke="#aaa"><path d="M2 2l4 4 4-4" /></svg>
                </Stepper>
                2
              </FieldInput>
            </FieldRow>
          </Fields>
        </Sidebar>

        <Viewport>
          <PlateScene />
          <BackBtn><BackIcon />返回</BackBtn>
          <Toolbar>
            <ToolGroup $ml={0}>
              <ToolSlot $w={44}><ToolA /></ToolSlot>
              <ToolSlot $w={44}><ToolB /></ToolSlot>
              <ToolSlot $w={44}><ToolC /></ToolSlot>
              <ToolSlot $w={44}><ToolD /></ToolSlot>
            </ToolGroup>
            <ToolGroup $ml={9}>
              <ToolSlot $w={44}><ToolPage t="0" /></ToolSlot>
              <ToolSlot $w={44}><ToolPage t="P" /></ToolSlot>
              <ToolSlot $w={44}><ToolLayers /></ToolSlot>
            </ToolGroup>
            <ToolSep $ml={15} />
            <ToolGroup $ml={14}>
              <ToolSlot $w={45}><ToolMove /></ToolSlot>
              <ToolSlot $w={45}><ToolRotate /></ToolSlot>
              <ToolSlot $w={45}><ToolScale /></ToolSlot>
              <ToolSlot $w={45}><ToolOrientOff /></ToolSlot>
              <ToolSlot $w={45}><ToolSplit /></ToolSlot>
              <ToolSlot $w={45}><ToolBool /></ToolSlot>
              <ToolSlot $w={45}><ToolCut /></ToolSlot>
              <ToolSlot $w={45}><ToolSeam /></ToolSlot>
              <ToolSlot $w={45}><ToolText /></ToolSlot>
              <ToolSlot $w={45}><ToolPaint /></ToolSlot>
              <ToolSlot $w={45}><ToolRuler /></ToolSlot>
              <ToolSlot $w={45}><ToolAssembly /></ToolSlot>
            </ToolGroup>
            <ToolSep $ml={14} />
            <ToolGroup $ml={12}>
              <ToolSlot $w={45}><ToolPuzzle /></ToolSlot>
            </ToolGroup>
          </Toolbar>
          <PosPanel>
            <span>世界坐标</span>
            <AxisLabel $c="#d0222a">X</AxisLabel>
            <AxisLabel $c="#3a9a5c">Y</AxisLabel>
            <AxisLabel $c="#1c1c9c">Z</AxisLabel>
            <span />
            <span>位置</span>
            <PosInput>78.02</PosInput>
            <PosInput>139.40</PosInput>
            <PosInput>12.80</PosInput>
            <span>mm</span>
          </PosPanel>
        </Viewport>
      </Main>

      <Taskbar>
        <TaskSlot $w={48}><WinLogo /></TaskSlot>
        <TaskSlot $w={55} $pr={8}><TaskView /></TaskSlot>
        <TaskSlot $w={152} $open $pl={6}><Edge />拓竹切片软件教程...</TaskSlot>
        <TaskSlot $w={54}><Folder /></TaskSlot>
        <TaskSlot $w={49}><Store /></TaskSlot>
        <TaskSlot $w={160} $active $open $pl={10}><BambuApp />未命名 - BambuSt...</TaskSlot>
        <Tray>
          <TrayChev />
          <TrayItem $ml={4}><Mic /></TrayItem>
          <TrayItem $ml={2}><Net /></TrayItem>
          <Vol />
          <ImeText>中</ImeText>
          <ImeBox>拼</ImeBox>
          <Clock>23:36<br />2024/6/12</Clock>
          <Notice />
        </Tray>
        <ShowDesktop />
      </Taskbar>
    </Root>
  );
}
